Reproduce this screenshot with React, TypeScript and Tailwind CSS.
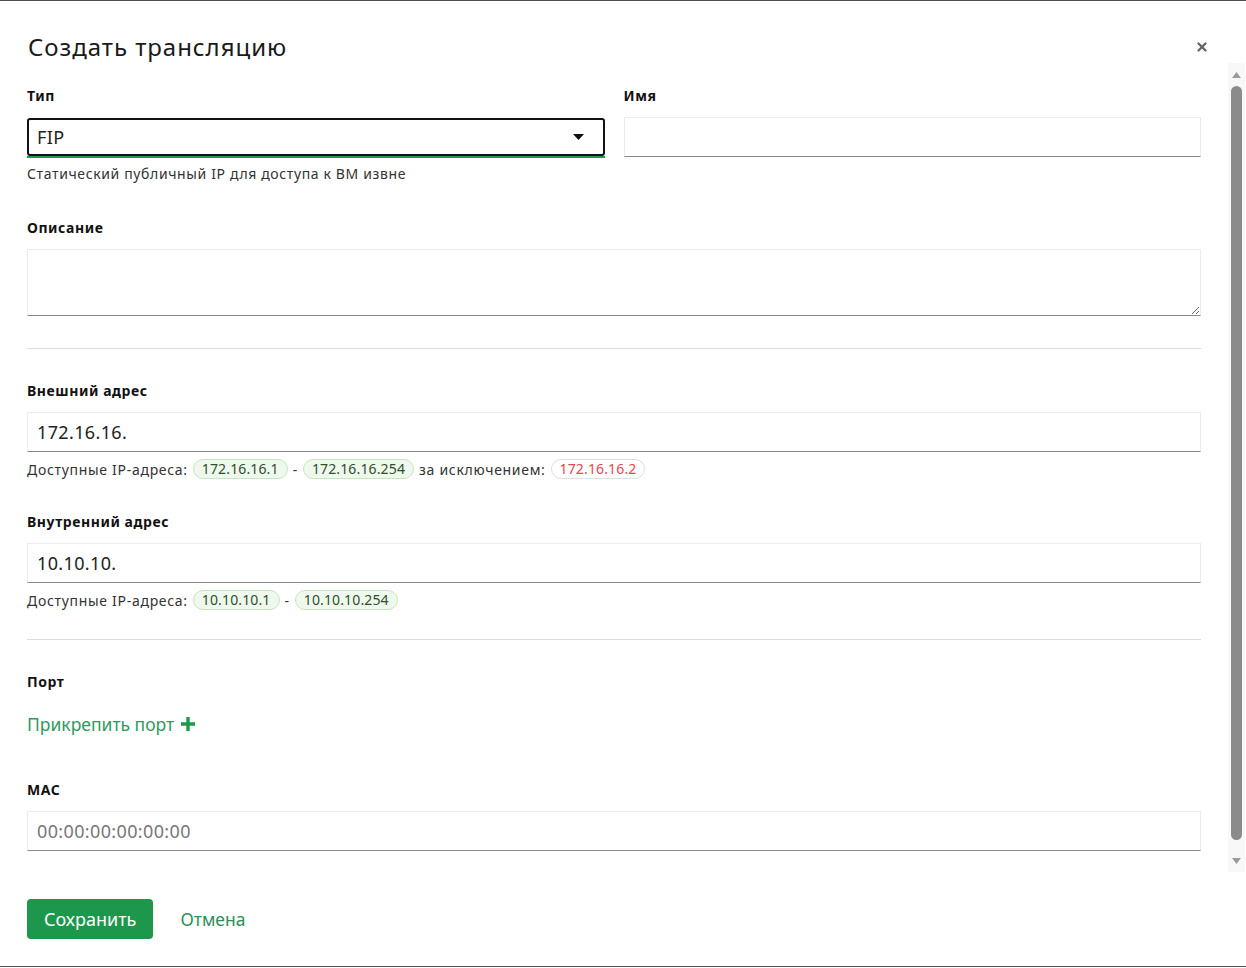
import React from "react";
import { X } from "lucide-react";

const font = "font-['Noto_Sans',_sans-serif]";

const Label: React.FC<{ children: React.ReactNode; className?: string }> = ({ children, className = "" }) => (
  <div className={`h-[20px] text-[14px] leading-[20px] font-bold tracking-[0.04em] text-[#111] ${className}`}>
    {children}
  </div>
);

const Chip: React.FC<{ children: React.ReactNode; red?: boolean }> = ({ children, red }) => (
  <span
    className={`inline-flex h-[20px] items-center rounded-full border px-[8px] text-[14px] leading-[18px] tracking-[0.01em] ${
      red ? "border-[#dedede] bg-white text-[#e5484d]" : "border-[#c6e6c1] bg-[#eff8ec] text-[#2f4f2f]"
    }`}
  >
    {children}
  </span>
);

const Input: React.FC<{ value?: string; placeholder?: string }> = ({ value, placeholder }) => (
  <input
    readOnly
    value={value}
    placeholder={placeholder}
    className="block h-[40px] w-full border border-[#ececec] border-b-[#8a8a8a] bg-white px-[9px] text-[18px] tracking-[0.02em] text-[#222] outline-none placeholder:text-[#777]"
  />
);

export default function App() {
  return (
    <div className={`h-[968px] w-[1246px] bg-white ${font}`}>
      <div className="flex h-[967px] flex-col border-y border-[#4f4f4f]">
        {/* header */}
        <div className="flex h-[62px] shrink-0 items-start pl-[28px] pr-[37px] pt-[30px]">
          <h1 className="flex-1 text-[24px] leading-[32px] tracking-[0.04em] text-[#1a1a1a]">Создать трансляцию</h1>
          <X className="mt-[9px] h-[14px] w-[14px] text-[#666]" strokeWidth={4} />
        </div>

        {/* scroll area */}
        <div className="flex h-[809px] shrink-0">
          <div className="flex-1 overflow-hidden px-[27px] pt-[23px]">
            <div className="grid grid-cols-2 gap-x-[19px]">
              <div>
                <Label>Тип</Label>
                <div className="mt-[12px] border-b-2 border-[#1d9a4c]">
                  <div className="flex h-[38px] items-center rounded-[3px] border-2 border-[#111] pl-[8px] pr-[19px]">
                    <span className="flex-1 text-[18px] tracking-[0.02em] text-[#222]">FIP</span>
                    <svg width="11" height="6" viewBox="0 0 11 6">
                      <path d="M0 0h11L5.5 6z" fill="#111" />
                    </svg>
                  </div>
                </div>
              </div>
              <div>
                <Label>Имя</Label>
                <div className="mt-[11px]">
                  <Input />
                </div>
              </div>
            </div>
            <div className="mt-[6px] text-[14px] leading-[20px] tracking-[0.045em] text-[#333]">
              Статический публичный IP для доступа к ВМ извне
            </div>

            <Label className="mt-[34px]">Описание</Label>
            <textarea
              readOnly
              className="mt-[11px] block h-[67px] w-full resize-y border border-[#ececec] border-b-[#8a8a8a] outline-none"
            />

            <div className="mt-[32px] h-px bg-[#dcdcdc]" />

            <Label className="mt-[32px]">Внешний адрес</Label>
            <div className="mt-[11px]">
              <Input value="172.16.16." />
            </div>
            <div className="mt-[7px] flex h-[20px] items-center gap-[5px] text-[14px] tracking-[0.05em] text-[#333]">
              <span>Доступные IP-адреса:</span>
              <Chip>172.16.16.1</Chip>
              <span>-</span>
              <Chip>172.16.16.254</Chip>
              <span>за исключением:</span>
              <Chip red>172.16.16.2</Chip>
            </div>

            <Label className="mt-[33px]">Внутренний адрес</Label>
            <div className="mt-[11px]">
              <Input value="10.10.10." />
            </div>
            <div className="mt-[7px] flex h-[20px] items-center gap-[5px] text-[14px] tracking-[0.05em] text-[#333]">
              <span>Доступные IP-адреса:</span>
              <Chip>10.10.10.1</Chip>
              <span>-</span>
              <Chip>10.10.10.254</Chip>
            </div>

            <div className="mt-[29px] h-px bg-[#dcdcdc]" />

            <Label className="mt-[32px]">Порт</Label>
            <div className="mt-[19px] flex items-center gap-[6px] text-[17.5px] leading-[26px] text-[#2e9a5e]">
              <span>Прикрепить порт</span>
              <svg width="16" height="16" viewBox="0 0 16 16">
                <path d="M8 1v14M1 8h14" stroke="#1d9a4c" strokeWidth="3.4" />
              </svg>
            </div>

            <Label className="mt-[43px]">MAC</Label>
            <div className="mt-[11px]">
              <Input placeholder="00:00:00:00:00:00" />
            </div>
          </div>

          {/* scrollbar */}
          <div className="mr-px flex w-[17px] flex-col items-center bg-[#f8f8f8] pt-[9px] pb-[8px]">
            <svg width="9" height="6" viewBox="0 0 9 6">
              <path d="M4.5 0L9 6H0z" fill="#9a9a9a" />
            </svg>
            <div className="mt-[8px] h-[754px] w-[11px] rounded-full bg-[#8b8b8b]" />
            <div className="flex-1" />
            <svg width="9" height="6" viewBox="0 0 9 6">
              <path d="M0 0h9L4.5 6z" fill="#9a9a9a" />
            </svg>
          </div>
        </div>

        {/* footer */}
        <div className="flex items-center gap-[27px] pl-[27px] pt-[27px]">
          <button className="h-[40px] rounded-[4px] bg-[#1c974b] px-[17px] text-[18px] text-white">Сохранить</button>
          <button className="text-[17.5px] text-[#2d8f55]">Отмена</button>
        </div>
      </div>
    </div>
  );
}
